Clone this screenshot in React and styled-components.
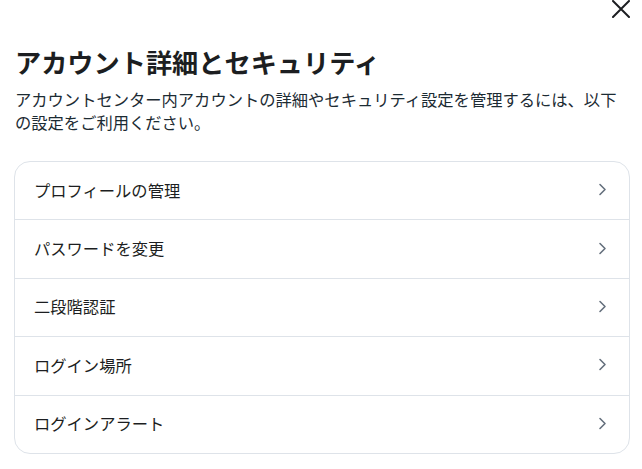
import React from "react";
import styled, { createGlobalStyle } from "styled-components";

const Global = createGlobalStyle`
  html, body { margin: 0; padding: 0; background: #ffffff; }
  body { font-family: "Noto Sans CJK JP", "Noto Sans", sans-serif; color: #1c1e21; }
`;

const Page = styled.div`
  width: 642px;
  height: 469px;
  box-sizing: border-box;
  padding: 0 12px 0 14px;
  display: flex;
  flex-direction: column;
`;

const TopBar = styled.div`
  display: flex;
  justify-content: flex-end;
  height: 20px;
`;

const CloseButton = styled.button`
  border: none;
  background: none;
  padding: 0;
  margin: 0;
  width: 18px;
  height: 18px;
  display: flex;
  cursor: pointer;
  color: #1c1e21;
`;

const Header = styled.div`
  padding: 0 1px;
  margin-top: 25px;
`;

const Title = styled.h1`
  margin: 0;
  font-size: 26.2px;
  line-height: 34px;
  font-weight: 700;
  color: #1c1e21;
`;

const Description = styled.p`
  margin: 9px 0 0;
  font-size: 16.3px;
  line-height: 23px;
  font-weight: 400;
  color: #1c2b33;
`;

const Card = styled.div`
  margin-top: 27px;
  border: 1px solid #dee3e9;
  border-radius: 16px;
  overflow: hidden;
  display: flex;
  flex-direction: column;
`;

const Row = styled.div`
  height: 55.4px;
  display: flex;
  align-items: center;
  justify-content: space-between;
  padding: 0 22px 2px 19px;
  border-top: ${(p) => (p.$first ? "none" : "1px solid #dee3e9")};
  cursor: pointer;
`;

const Label = styled.span`
  font-size: 16.3px;
  line-height: 22px;
  font-weight: 400;
  color: #1c1e21;
`;

const Chevron = () => (
  <svg width="9" height="13" viewBox="0 0 9 13" fill="none">
    <path d="M2 1.5 L7 6.5 L2 11.5" stroke="#65707d" strokeWidth="1.6" strokeLinecap="round" strokeLinejoin="round" />
  </svg>
);

const items = ["プロフィールの管理", "パスワードを変更", "二段階認証", "ログイン場所", "ログインアラート"];

export default function App() {
  return (
    <>
      <Global />
      <Page>
        <TopBar>
          <CloseButton aria-label="閉じる">
            <svg width="18" height="18" viewBox="0 0 18 18" fill="none">
              <path d="M1 1 L17 17 M17 1 L1 17" stroke="#1c1e21" strokeWidth="2" strokeLinecap="round" />
            </svg>
          </CloseButton>
        </TopBar>
        <Header>
          <Title>アカウント詳細とセキュリティ</Title>
          <Description>
            アカウントセンター内アカウントの詳細やセキュリティ設定を管理するには、以下の設定をご利用ください。
          </Description>
        </Header>
        <Card>
          {items.map((t, i) => (
            <Row key={t} $first={i === 0}>
              <Label>{t}</Label>
              <Chevron />
            </Row>
          ))}
        </Card>
      </Page>
    </>
  );
}
